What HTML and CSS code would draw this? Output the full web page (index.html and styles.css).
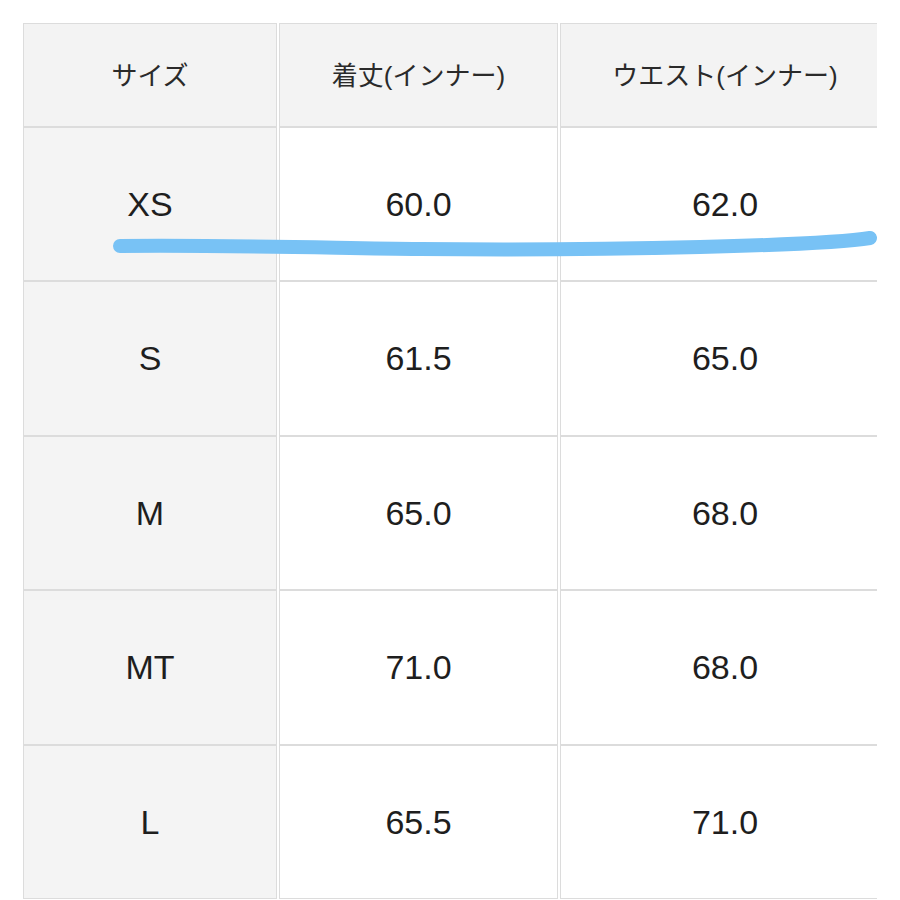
FILE: index.html
```html
<!DOCTYPE html>
<html lang="ja">
<head>
<meta charset="utf-8">
<link rel="stylesheet" href="styles.css">
</head>
<body>
<div class="page">
  <div class="table-clip">
    <div class="size-table">
      <div class="cell head">サイズ</div>
      <div class="cell head">着丈(インナー)</div>
      <div class="cell head">ウエスト(インナー)</div>

      <div class="cell label">XS</div>
      <div class="cell">60.0</div>
      <div class="cell">62.0</div>

      <div class="cell label">S</div>
      <div class="cell">61.5</div>
      <div class="cell">65.0</div>

      <div class="cell label">M</div>
      <div class="cell">65.0</div>
      <div class="cell">68.0</div>

      <div class="cell label">MT</div>
      <div class="cell">71.0</div>
      <div class="cell">68.0</div>

      <div class="cell label">L</div>
      <div class="cell">65.5</div>
      <div class="cell">71.0</div>
    </div>
  </div>
  <svg class="marker" width="900" height="300" viewBox="0 0 900 300">
    <path d="M120 246 C 240 245, 330 248, 420 249 C 520 250, 620 249, 700 247 C 780 245, 840 243, 870 238" fill="none" stroke="#78c2f5" stroke-width="14" stroke-linecap="round"/>
  </svg>
</div>
</body>
</html>
```

FILE: styles.css
```css
html, body {
  margin: 0;
  padding: 0;
  background: #ffffff;
}

.page {
  position: relative;
  width: 900px;
  height: 900px;
  overflow: hidden;
  padding: 23px 0 0 23px;
  box-sizing: border-box;
}

.table-clip {
  width: 854px;
  overflow: hidden;
}

.size-table {
  display: grid;
  grid-template-columns: 254px 279px 330px;
  grid-template-rows: 104px 154px 155px 154px 155px 154px;
  column-gap: 2px;
  row-gap: 0;
  width: 867px;
  font-family: "Liberation Sans", "Noto Sans CJK JP", Arial, sans-serif;
  color: #1e1e1e;
}

.cell {
  display: flex;
  align-items: center;
  justify-content: center;
  border: 1px solid #dcdcdc;
  background: #ffffff;
  font-size: 34px;
  box-sizing: border-box;
}

.cell.head {
  background: #f3f3f3;
  font-size: 26px;
  color: #2a2a2a;
  padding-bottom: 3px;
}

.cell.label {
  background: #f4f4f4;
}

.marker {
  position: absolute;
  left: 0;
  top: 0;
  pointer-events: none;
}
```
